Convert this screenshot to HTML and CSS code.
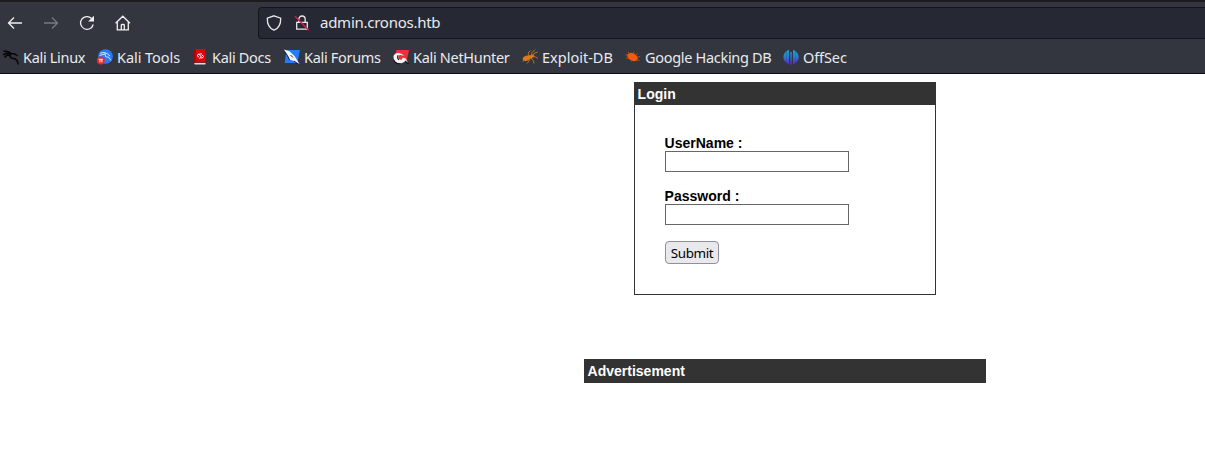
FILE: index.html
```html
<!DOCTYPE html>
<html lang="en">
<head>
<meta charset="utf-8">
<title>Login</title>
<link rel="stylesheet" href="styles.css">
</head>
<body>
<header class="chrome">
  <div class="toolbar">
    <nav class="nav-buttons">
      <svg class="nav-icon" viewBox="0 0 16 16"><path d="M15 8H1.500M7 2.500 1.500 8 7 13.500"/></svg>
      <svg class="nav-icon disabled" viewBox="0 0 16 16"><path d="M1 8h13.500M9 2.500 14.500 8 9 13.500"/></svg>
      <svg class="nav-icon" viewBox="0 0 16 16"><path d="M14.200 9.500A6.400 6.400 0 1 1 12.600 3.500"/><path class="solid" d="M15 .7v5.900H9.100z"/></svg>
      <svg class="nav-icon" viewBox="0 0 16 16"><path d="M.6 8.300 7.800 1.200 15 8.300M2.300 7v7.900h11V7M6.300 14.900v-4.600q0-.8.8-.8h1.400q.8 0 .8.800v4.600"/></svg>
    </nav>
    <div class="urlbar">
      <svg class="url-icon" viewBox="0 0 16 16"><path d="M8 .8 14.700 3.200C14.900 8.500 12.800 13.200 8 15.200 3.200 13.200 1.100 8.500 1.300 3.200z"/></svg>
      <svg class="url-icon lock" viewBox="0 0 16 16"><path d="M4.800 7V4.200a3.200 3.200 0 0 1 6.400 0V7M2.700 7.300h10.600v6.900H2.700z"/><path class="slash" d="M1 1.200 14.800 15.200"/></svg>
      <span class="address">admin.cronos.htb</span>
    </div>
  </div>
  <nav class="bookmarks">
    <span class="bookmark"><svg viewBox="0 0 16 16"><path d="M.5 2 5.500 2.800 8.500 4.800M0 5.800 3.500 4.300 8 4.800M1.500 8.300 4 6.300 7 6M8 4.800 6.800 7 8.300 9 12.300 10 14.300 12 15.300 15.500M8 4.800l3.500 0 3 2.200" fill="none" stroke="#050608" stroke-width="1.500"/></svg>Kali Linux</span>
    <span class="bookmark"><svg viewBox="0 0 16 16"><circle cx="8.500" cy="7.500" r="7.300" fill="#2879f4"/><path d="M3 4.200 7 3.500l3 1 3 2.500M2.500 6.500 8 5M8 4.500l.5 3 3.500 1 2 3" fill="none" stroke="#e8f2ff" stroke-width=".9"/><circle cx="3.800" cy="11.500" r="3.900" fill="#ee252e"/><path d="M1.700 10.300h4.200M3 10.300v3M4.900 10.300v3" stroke="#fff" stroke-width=".9"/></svg>Kali Tools</span>
    <span class="bookmark"><svg viewBox="0 0 16 16"><path d="M2 1.500Q2 0 3.500 0H13.500v13.500H2z" fill="#d8060d"/><path d="M2 1.500Q2 0 3.500 0v13.500H2z" fill="#9d080d"/><path d="M2.300 14h11.200v1.500H3Q2.300 15.500 2.300 14z" fill="#ddd"/><path d="M7.300 4.700 5 6.500 7 8.300M9.500 5.700 11.800 7.500 9.500 9.500M9.600 4.500 7.200 5.500 9.600 8.200 7.200 9.500" fill="none" stroke="#fff" stroke-width="1"/></svg>Kali Docs</span>
    <span class="bookmark"><svg viewBox="0 0 16 16"><path d="M2.500 1H16l-2.700 13H.7z" fill="#267cf5"/><path d="M0 .5 5.500 2.200 10.500 7 15.500 15 10 12 6 10.800 3.500 6.500z" fill="#f5f5f5"/><path d="m.5 2.500 3 4 2 4.500M6.500 6 9 8.500M10 12l4.500 3.300" fill="none" stroke="#111722" stroke-width=".9"/></svg>Kali Forums</span>
    <span class="bookmark"><svg viewBox="0 0 16 16"><path d="M3.500 1H16l-2.500 12H.8z" fill="#f02f3c"/><path d="M.5 7Q2 3.500 6 4q3 .2 5.500 3.200L9 6.300Q5.300 5.200 5.300 8.300q.2 3.200 3.700 2.200l.5-1.700 3 .4 2.700 4.800-3.200-1.500Q6.200 16.500 2 12.500.3 10.500.5 7z" fill="#f3f3f3"/><path d="M.6 11Q3 15.500 7.500 14.600M5.200 6.200Q3.800 8.500 5.800 11M12 12l3.500 3" fill="none" stroke="#111" stroke-width="1.100"/></svg>Kali NetHunter</span>
    <span class="bookmark"><svg viewBox="0 0 16 16"><ellipse cx="4.800" cy="9.200" rx="4.200" ry="2.500" transform="rotate(-20 4.800 9.200)" fill="#dc7c1b"/><ellipse cx="9.500" cy="7.500" rx="2.800" ry="1.700" transform="rotate(-20 9.500 7.500)" fill="#dc7c1b"/><path d="M7.500 7.500 6 4 8.500 1.500M9.500 6.500 10 3.500 13 .5M11 6.500 12.500 4 15.800 3M7.500 9.500 7 12 5 14.500M9 9l2.500 3 .5 2.500M11 7.500l3 .5 1.800 1.500M3 10.500.5 12.500" fill="none" stroke="#c9761e" stroke-width=".9"/></svg>Exploit-DB</span>
    <span class="bookmark"><svg viewBox="0 0 16 16"><ellipse cx="7.500" cy="8" rx="5.600" ry="3.600" transform="rotate(28 7.500 8)" fill="#f15b0b"/><path d="M3 6.500.5 5.500M4 9l-3 .3M5 5 3 3M8 5l1-2.300M10.500 6.500l2-2.200M12 8.500l3-1M11 10.500l3.500 1M7.500 11 6 12.500" fill="none" stroke="#d25314" stroke-width=".8"/></svg>Google Hacking DB</span>
    <span class="bookmark"><svg viewBox="0 0 16 16"><defs><linearGradient id="offsec" gradientUnits="userSpaceOnUse" x1="0" y1="0" x2="0" y2="16"><stop offset="0" stop-color="#18a9c9"/><stop offset=".5" stop-color="#287bd0"/><stop offset="1" stop-color="#6c17cc"/></linearGradient></defs><path d="M6 .7v14.600C-1.500 13-1.500 3 6 .7zM10 .7v14.600C17.500 13 17.500 3 10 .7zM7.300 3h1.400v12.800H7.300z" fill="url(#offsec)"/><path d="M3.500 2v12M12.500 2v12" stroke="#33363e" stroke-opacity=".35" stroke-width=".6"/></svg>OffSec</span>
  </nav>
</header>
<main class="page">
  <section class="login-box">
    <h1 class="bar">Login</h1>
    <form class="login-form">
      <label class="field">UserName :<input type="text" class="text-input"></label>
      <label class="field">Password :<input type="password" class="text-input"></label>
      <button type="button" class="submit">Submit</button>
    </form>
  </section>
  <section class="ad-box"><h2 class="bar">Advertisement</h2></section>
</main>
</body>
</html>
```
FILE: styles.css
```css
* { box-sizing: border-box; }
body {
  margin: 0;
  background: #fff;
  color: #000;
  font: 14px/16px "Liberation Sans", Arial, sans-serif;
  overflow: hidden;
}
.chrome {
  height: 74px;
  background: #33363e;
  border-top: 2px solid #1b1c21;
  border-bottom: 1px solid #090a0f;
  color: #e9eaee;
  font-family: "Noto Sans", sans-serif;
}
.toolbar { display: flex; height: 41px; align-items: center; }
.nav-buttons { display: flex; width: 258px; padding-left: 7px; gap: 20px; }
.nav-icon { width: 16px; height: 16px; fill: none; stroke: #f0f0f3; stroke-width: 1.3; }
.nav-icon .solid { fill: #f0f0f3; stroke: none; }
.disabled { stroke: #777981; }
.urlbar {
  display: flex;
  align-items: center;
  flex: 1;
  height: 32px;
  padding-left: 7px;
  background: #262833;
  border: 1px solid #14161d;
  border-right: 0;
  border-radius: 4px 0 0 4px;
}
.url-icon { width: 16px; height: 16px; fill: none; stroke: #e6e7ea; stroke-width: 1.3; }
.lock { margin: 0 10px 0 12px; }
.url-icon .slash { stroke: #e11d4d; stroke-width: 1.3; }
.address {
  padding-bottom: 2px;
  font-size: 15px;
  line-height: 20px;
  letter-spacing: -0.26px;
}
.bookmarks {
  display: grid;
  grid-template-columns: 94px 95px 92px 109px 129px 103px 158px 80px;
  padding: 4px 0 0 3px;
}
.bookmark {
  display: flex;
  align-items: center;
  gap: 4px;
  font-size: 14.5px;
  line-height: 20px;
  letter-spacing: -0.31px;
  white-space: nowrap;
}
.bookmark:nth-child(2) { letter-spacing: -0.06px; }
.bookmark:nth-child(6) { letter-spacing: 0; }
.bookmark:nth-child(8) { letter-spacing: -0.1px; }
.bookmark svg { width: 16px; height: 16px; flex: none; }
.page {
  display: flex;
  flex-direction: column;
  align-items: center;
  padding: 8px 0 0 365px;
}
.bar {
  margin: 0;
  padding: 3px 3px 3px 2.6px;
  background: #333;
  color: #fff;
  font-size: 14px;
  line-height: 16px;
}
.login-box { width: 302px; height: 213px; border: 1px solid #333; }
.login-form {
  display: flex;
  flex-direction: column;
  align-items: flex-start;
  gap: 16px;
  padding: 30px;
}
.field {
  display: flex;
  flex-direction: column;
  font-weight: bold;
  text-indent: -0.4px;
}
.text-input {
  width: 184px;
  height: 21px;
  margin: 0;
  padding: 1px;
  background: #fff;
  border: 1px solid #666;
}
.submit {
  width: 54px;
  height: 23px;
  padding: 0;
  background: #e9e9ed;
  border: 1px solid #8f8f9d;
  border-radius: 4px;
  color: #000;
  font: 13.4px/18px "Noto Sans", sans-serif;
  letter-spacing: -0.35px;
}
.ad-box {
  width: 402px;
  height: 24px;
  margin-top: 64px;
  border: 1px solid #333;
  background: #333;
}
```
